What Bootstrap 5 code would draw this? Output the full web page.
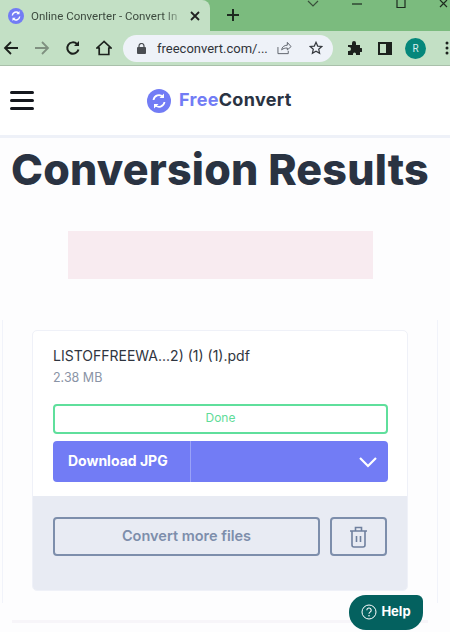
<!DOCTYPE html>
<html lang="en">
<head>
<meta charset="UTF-8">
<title>Online Converter - Convert Images</title>
<meta name="viewport" content="width=device-width, initial-scale=1">
<link href="https://cdn.jsdelivr.net/npm/bootstrap@5.3.3/dist/css/bootstrap.min.css" rel="stylesheet">
<style>
html, body { width: 450px; height: 632px; overflow: hidden; }
body { background: #fdfdfe; font-family: "Inter", "Liberation Sans", sans-serif; color: #2a3342; }
.tab-strip { height: 31px; background: #7bbb7e; }
.chrome-tab { width: 210px; height: 31px; background: #c3e0c5; border-radius: 0 8px 0 0; padding: 0 8px; font: 11.5px "Roboto", sans-serif; color: #3c4a3e; }
.chrome-tab span { width: 150px; white-space: nowrap; margin-left: 7px; -webkit-mask-image: linear-gradient(90deg, #000 88%, rgba(0,0,0,.25)); mask-image: linear-gradient(90deg, #000 88%, rgba(0,0,0,.25)); }
.tab-x { margin-left: 9px; }
.win-btns { gap: 32px; margin-left: auto; margin-right: -1px; }
.tool-bar { height: 34px; background: #c3e0c5; padding: 0 0 0 3px; border-bottom: 1px solid #a9c0aa; box-sizing: content-box; }
.tb-gap { margin-left: 15px; }
.omni { width: 210px; height: 27px; margin-left: 11px; background: #eef2f8; border-radius: 14px; padding: 0 10px 0 14px; font: 13px "Roboto", sans-serif; color: #30343a; }
.omni-text { margin-left: 11px; }
.omni-star { margin-left: 17px; }
.ext-ico { margin-left: 15px; }
.side-ico { margin-left: 16px; }
.avatar-r { width: 21px; height: 21px; margin-left: 13px; background: #05877b; color: #d7eeee; font: 10px "Roboto", sans-serif; }
.dots-ico { margin-left: 19px; }
.site-head { height: 69px; padding: 0 10px; background: #fff; border-bottom: 3px solid #eef1f8; box-sizing: content-box; }
.burger { width: 24px; gap: 5px; }
.burger i { display: block; height: 3px; background: #14171d; border-radius: 2px; }
.logo-word { font-size: 18px; font-weight: 700; margin-left: 8px; padding-bottom: 2px; color: #2a3342; letter-spacing: .3px; }
.logo-word b { color: #727cf5; font-weight: 700; }
.logo-wrap { margin-left: 113px; }
.page-title { font-size: 43px; font-weight: 800; line-height: 1; margin: 10px 0 0; padding-right: 10px; text-align: center; white-space: nowrap; color: #2a3342; letter-spacing: .2px; }
.ad-box { width: 305px; height: 48px; background: #f8ebf0; margin: 40px 0 41px 68px; }
.result-wrap { width: 436px; height: 283px; margin-left: 2px; padding: 10px 29px 0 29px; border: 1px solid #f1f3fa; border-bottom: 0; border-top: 0; }
.file-card { width: 376px; height: 261px; background: #fff; border: 1px solid #eff1f8; border-radius: 5px; overflow: hidden; }
.file-top { height: 165px; padding: 16px 19px 0 20px; }
.file-name { font-size: 14px; line-height: 18px; color: #2f3540; }
.file-size { font-size: 12.5px; line-height: 18px; margin-top: 4px; color: #8a94a6; }
.done-bar { height: 30px; margin-top: 17px; padding-bottom: 2px; border: 2px solid #5fdf9c; border-radius: 4px; color: #5fdc98; font-size: 12px; }
.dl-btn { height: 41px; margin-top: 7px; background: #727cf5; border-radius: 4px; color: #fff; font-size: 14px; font-weight: 700; }
.dl-label { width: 138px; padding: 0 0 2px 15px; border-right: 1px solid #9aa2f8; height: 100%; }
.dl-arrow { margin-right: 10px; }
.file-foot { height: 94px; background: #e8ebf3; padding: 21px 20px 0; }
.more-btn { width: 267px; height: 39px; padding: 0 0 2px; border: 2px solid #7d8eab; border-radius: 4px; color: #7d8eab; font-size: 14.5px; font-weight: 600; background: transparent; }
.trash-btn { width: 57px; height: 39px; border: 2px solid #7d8eab; border-radius: 4px; margin-left: 10px; background: transparent; }
.help-btn { position: absolute; left: 349px; top: 595px; width: 74px; height: 35px; padding-bottom: 1px; background: #04615f; color: #fff; border-radius: 17px 6px 17px 17px; font-size: 13px; font-weight: 700; }
.foot-line { height: 3px; width: 416px; margin: 17px 0 0 12px; background: #f7f5f9; }
</style>
</head>
<body class="position-relative">
<div class="tab-strip d-flex align-items-start">
    <div class="chrome-tab d-flex align-items-center">
        <svg width="16" height="16" viewBox="0 0 16 16"><circle cx="8" cy="8" r="8" fill="#727cf5"/><path d="M4.300 7.500a3.800 3.800 0 0 1 6.500-2.300M11.700 8.500a3.800 3.800 0 0 1-6.500 2.300" fill="none" stroke="#fff" stroke-width="1.400"/><path d="M11.500 3v3.200H8.300zM4.500 13V9.800h3.200z" fill="#fff"/></svg>
        <span>Online Converter - Convert In</span>
        <svg class="tab-x" width="10" height="10" viewBox="0 0 10 10"><path d="M1 1l8 8M9 1l-8 8" stroke="#222" stroke-width="1.800"/></svg>
    </div>
    <svg class="ms-3 mt-2" width="14" height="14" viewBox="0 0 14 14"><path d="M7 1v12M1 7h12" stroke="#1d2a1f" stroke-width="2"/></svg>
    <div class="win-btns d-flex align-items-start">
        <svg width="12" height="9" viewBox="0 0 12 9"><path d="M1 1l5 5 5-5" fill="none" stroke="#39503b" stroke-width="1.200"/></svg>
        <svg width="12" height="9" viewBox="0 0 12 9"><path d="M1 4h10" stroke="#1d2a1f" stroke-width="1.200"/></svg>
        <svg width="12" height="9" viewBox="0 0 12 9"><path d="M2 0v7.500h8V0" fill="none" stroke="#1d2a1f" stroke-width="1.200"/></svg>
        <svg width="12" height="9" viewBox="0 0 12 9"><path d="M1 0l7 7M8 0L1 7" stroke="#1d2a1f" stroke-width="1.200"/></svg>
    </div>
</div>
<div class="tool-bar d-flex align-items-center">
    <svg width="16" height="16" viewBox="0 0 16 16"><path d="M15 8H2M8 2L2 8l6 6" fill="none" stroke="#1c211d" stroke-width="1.800"/></svg>
    <svg class="tb-gap" width="16" height="16" viewBox="0 0 16 16"><path d="M1 8h13M8 2l6 6-6 6" fill="none" stroke="#7f9080" stroke-width="1.800"/></svg>
    <svg class="tb-gap" width="16" height="16" viewBox="0 0 16 16"><path d="M13.500 9.500A5.700 5.700 0 1 1 12 4" fill="none" stroke="#1c211d" stroke-width="2"/><path d="M14 1v5H9z" fill="#1c211d"/></svg>
    <svg class="tb-gap" width="16" height="16" viewBox="0 0 16 16"><path d="M8 1.500L1 8h2.200v6.500h9.600V8H15z" fill="none" stroke="#1c211d" stroke-width="1.700"/></svg>
    <div class="omni d-flex align-items-center">
        <svg width="9" height="11" viewBox="0 0 9 11"><rect y="4" width="9" height="7" rx="1" fill="#4a4d52"/><path d="M2 4.500V3a2.500 2.500 0 0 1 5 0v1.500" fill="none" stroke="#4a4d52" stroke-width="1.200"/></svg>
        <span class="omni-text flex-grow-1">freeconvert.com/...</span>
        <svg width="15" height="14" viewBox="0 0 16 14"><path d="M1 6v7h11V10M5 9c0-3 3-5 6-5V1l4 4.500L11 9V7C8.500 7 6.500 7.500 5 9z" fill="none" stroke="#5a5f66" stroke-width="1"/></svg>
        <svg class="omni-star" width="14" height="14" viewBox="0 0 14 14"><path d="M7 1.300l1.700 3.800 4 .4-3 2.700.9 4.100L7 10.200l-3.600 2.100.9-4.100-3-2.700 4-.4z" fill="none" stroke="#33373c" stroke-width="1.200"/></svg>
    </div>
    <svg class="ext-ico" width="14" height="14" viewBox="0 0 14 14"><path d="M0 4h4V2a2 2 0 0 1 4 0v2h4v3h1a2 2 0 0 1 0 4h-1v3H8v-1a1.500 1.500 0 0 0-3 0v1H0v-4h1a2 2 0 0 0 0-4H0z" fill="#1c211d"/></svg>
    <svg class="side-ico" width="14" height="13" viewBox="0 0 14 13"><rect x="1" y="1" width="12" height="11" fill="none" stroke="#1c211d" stroke-width="2"/><rect x="8" y="1" width="5" height="11" fill="#1c211d"/></svg>
    <div class="avatar-r rounded-circle d-flex align-items-center justify-content-center">R</div>
    <svg class="dots-ico" width="4" height="14" viewBox="0 0 4 14"><circle cx="2" cy="2" r="1.500" fill="#1c211d"/><circle cx="2" cy="7" r="1.500" fill="#1c211d"/><circle cx="2" cy="12" r="1.500" fill="#1c211d"/></svg>
</div>
<header class="site-head d-flex align-items-center">
    <div class="burger d-flex flex-column"><i></i><i></i><i></i></div>
    <div class="logo-wrap d-flex align-items-center">
        <svg width="24" height="24" viewBox="0 0 24 24"><circle cx="12" cy="12" r="12" fill="#727cf5"/><path d="M6.500 11a5.500 5.500 0 0 1 9.500-3M17.500 13a5.500 5.500 0 0 1-9.500 3" fill="none" stroke="#fff" stroke-width="1.800"/><path d="M17 4.500V9h-4.500zM7 19.500V15h4.500z" fill="#fff"/></svg>
        <span class="logo-word"><b>Free</b>Convert</span>
    </div>
</header>
<h1 class="page-title">Conversion Results</h1>
<div class="ad-box"></div>
<div class="result-wrap">
    <div class="file-card">
        <div class="file-top">
            <div class="file-name">LISTOFFREEWA...2) (1) (1).pdf</div>
            <div class="file-size">2.38 MB</div>
            <div class="done-bar d-flex align-items-center justify-content-center">Done</div>
            <div class="dl-btn d-flex align-items-center">
                <div class="dl-label d-flex align-items-center">Download JPG</div>
                <svg class="ms-auto dl-arrow" width="20" height="12" viewBox="0 0 20 12"><path d="M2 2l8 8 8-8" fill="none" stroke="#fff" stroke-width="2.200"/></svg>
            </div>
        </div>
        <div class="file-foot d-flex align-items-start">
            <button class="more-btn btn d-flex align-items-center justify-content-center">Convert more files</button>
            <button class="trash-btn btn p-0 d-flex align-items-center justify-content-center">
                <svg width="19" height="22" viewBox="0 0 19 22"><path d="M1 5h17M6.500 5V1.500h6V5M3 5v14a2 2 0 0 0 2 2h9a2 2 0 0 0 2-2V5M7.500 10v6M11.500 10v6" fill="none" stroke="#6f809e" stroke-width="1.600"/></svg>
            </button>
        </div>
    </div>
</div>
<div class="foot-line"></div>
<div class="help-btn d-flex align-items-center justify-content-center">
    <svg class="me-1" width="16" height="16" viewBox="0 0 16 16"><circle cx="8" cy="8" r="7" fill="none" stroke="#fff" stroke-width="1"/><path d="M5.800 6.200a2.200 2.200 0 1 1 3.300 1.900c-.8.500-1.100.9-1.100 1.700" fill="none" stroke="#fff" stroke-width="1.100"/><circle cx="8" cy="11.800" r=".8" fill="#fff"/></svg>
    Help
</div>
</body>
</html>
